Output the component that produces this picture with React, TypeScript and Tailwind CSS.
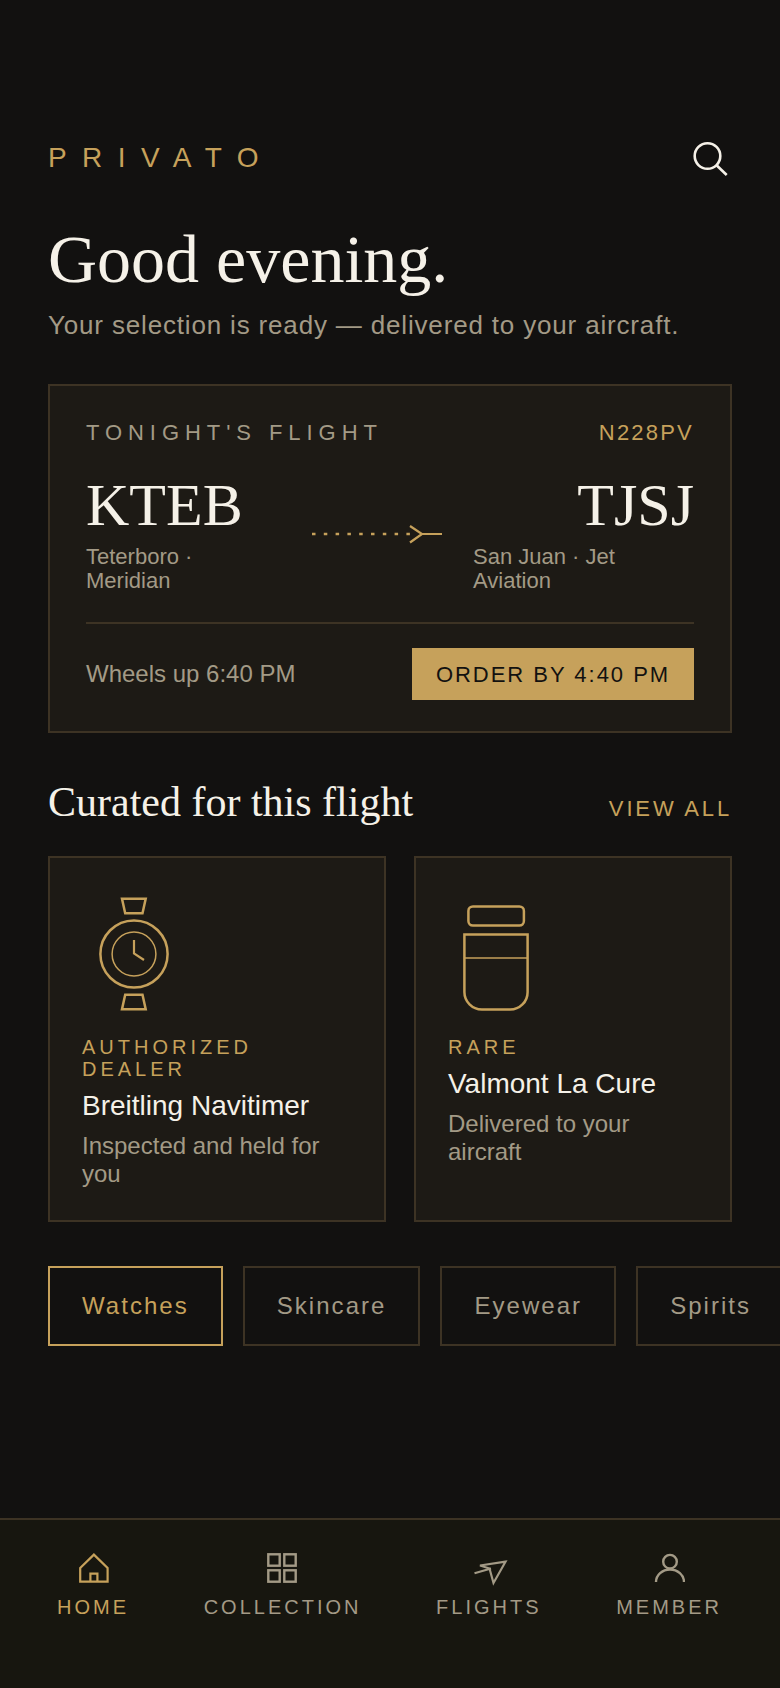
const SANS = "font-['Liberation_Sans',Arial,sans-serif]";
const SERIF = "font-['Liberation_Serif','Times_New_Roman',serif]";

const tabs = ["Watches", "Skincare", "Eyewear", "Spirits"];

function SearchIcon() {
  return (
    <svg width="44" height="44" viewBox="0 0 44 44" fill="none" stroke="#f5f1e8" strokeWidth="2.6" className="shrink-0">
      <circle cx="19.5" cy="20" r="12.8" />
      <path d="M28.8 29.5 L38.7 39" />
    </svg>
  );
}

function RouteArrow() {
  return (
    <svg width="130" height="20" viewBox="0 0 130 20" fill="none" stroke="#c6a15b" className="shrink-0 mt-[53px]">
      <path d="M0 10 H98" strokeWidth="2.4" strokeDasharray="3.5 8.3" />
      <path d="M98 2 L110 10 L98 18.5 M110 10 H130" strokeWidth="2.2" />
    </svg>
  );
}

function WatchIcon() {
  return (
    <svg width="120" height="120" viewBox="0 0 120 120" fill="none" stroke="#c6a15b" strokeWidth="2.5">
      <path d="M40 6.8 H63.7 L60.5 21.2 H43.2 Z" />
      <path d="M43.2 102.8 H60.5 L63.7 117.2 H40 Z" />
      <circle cx="52" cy="62" r="33.6" />
      <circle cx="52" cy="62" r="21.9" strokeWidth="1.5" />
      <path d="M52 48 V61.3 L62 68" strokeWidth="2.2" />
    </svg>
  );
}

function JarIcon() {
  return (
    <svg width="120" height="120" viewBox="0 0 120 120" fill="none" stroke="#c6a15b" strokeWidth="2.5">
      <rect x="20.4" y="14.4" width="55.5" height="19.2" rx="4.5" />
      <path d="M16.4 42.4 H79.6 V100 A17.5 17.5 0 0 1 62 117.6 H34 A17.5 17.5 0 0 1 16.4 100 Z" />
      <path d="M16.4 66 H79.6" strokeWidth="1.6" />
    </svg>
  );
}

function HomeIcon() {
  return (
    <svg width="32" height="32" viewBox="0 0 32 32" fill="none" stroke="#c6a15b" strokeWidth="2.2">
      <path d="M3.2 16 L16.9 2.6 L30.6 16 V29.7 H3.2 Z" />
      <path d="M13.4 29.7 V21.7 H20.4 V29.7" />
    </svg>
  );
}

function GridIcon() {
  return (
    <svg width="32" height="32" viewBox="0 0 32 32" fill="none" stroke="#a39a86" strokeWidth="2.4" className="overflow-visible">
      <rect x="1.3" y="2.3" width="11.4" height="11.4" />
      <rect x="17.3" y="2.3" width="11.4" height="11.4" />
      <rect x="1.3" y="18.3" width="11.4" height="11.4" />
      <rect x="17.3" y="18.3" width="11.4" height="11.4" />
    </svg>
  );
}

function PlaneIcon() {
  return (
    <svg width="32" height="32" viewBox="0 0 32 32" fill="none" stroke="#a39a86" strokeWidth="2.2" className="overflow-visible">
      <path d="M32.5 9.7 L7 13.5 L16.5 16.5 L20.5 31 Z" />
      <path d="M1.5 21.3 L18 16.5" />
    </svg>
  );
}

function UserIcon() {
  return (
    <svg width="32" height="32" viewBox="0 0 32 32" fill="none" stroke="#a39a86" strokeWidth="2.4">
      <circle cx="17" cy="9.7" r="6.8" />
      <path d="M3 30 A14 12.5 0 0 1 31 30" />
    </svg>
  );
}

function NavItem({ label, icon, active }: { label: string; icon: React.ReactNode; active?: boolean }) {
  return (
    <div className="flex flex-col items-center gap-[11px]">
      {icon}
      <span className={"text-[20px] leading-[24px] tracking-[0.15em] " + (active ? "text-[#c6a15b]" : "text-[#a39a86]")}>
        {label}
      </span>
    </div>
  );
}

export default function App() {
  return (
    <div className={`${SANS} w-[780px] h-[1688px] overflow-hidden bg-[#121110] flex flex-col`}>
      <main className="flex-1 pt-[136px] pl-[48px]">
        <header className="flex items-center justify-between pr-[48px] h-[44px]">
          <span className="text-[28px] leading-none tracking-[0.55em] text-[#c6a15b]">PRIVATO</span>
          <SearchIcon />
        </header>

        <h1 className={`${SERIF} mt-[39px] text-[68px] leading-[80px] text-[#f5f1e8]`}>Good evening.</h1>
        <p className="mt-[9px] text-[26px] leading-[34px] tracking-[0.032em] text-[#a39a86]">
          Your selection is ready — delivered to your aircraft.
        </p>

        <section className="mt-[42px] w-[684px] h-[349px] border-2 border-[#3d3324] bg-[#1d1a15] px-[36px] pt-[33px]">
          <div className="flex justify-between items-center h-[26px]">
            <span className="text-[22px] tracking-[0.27em] text-[#a39a86]">TONIGHT'S FLIGHT</span>
            <span className="text-[22px] tracking-[0.1em] text-[#c6a15b]">N228PV</span>
          </div>

          <div className="flex items-start mt-[26px]">
            <div className="w-[226px]">
              <div className={`${SERIF} text-[60px] leading-[68px] text-[#f5f1e8]`}>KTEB</div>
              <div className="mt-[6px] text-[22px] leading-[24px] text-[#a39a86] w-[160px]">Teterboro · Meridian</div>
            </div>
            <RouteArrow />
            <div className="w-[221px] ml-auto">
              <div className={`${SERIF} text-[60px] leading-[68px] text-[#f5f1e8] text-right`}>TJSJ</div>
              <div className="mt-[6px] text-[22px] leading-[24px] text-[#a39a86]">San Juan · Jet Aviation</div>
            </div>
          </div>

          <div className="mt-[29px] border-t-2 border-[#3d3324] pt-[24px] flex items-center justify-between">
            <span className="text-[24px] text-[#a39a86]">Wheels up 6:40 PM</span>
            <span className="h-[52px] w-[282px] bg-[#c6a15b] flex items-center justify-center text-[22px] tracking-[0.09em] text-[#121110]">
              ORDER BY 4:40 PM
            </span>
          </div>
        </section>

        <div className="mt-[43px] pr-[48px] flex items-baseline justify-between">
          <h2 className={`${SERIF} text-[42px] leading-[52px] text-[#f5f1e8]`}>Curated for this flight</h2>
          <span className="text-[22px] tracking-[0.13em] text-[#c6a15b]">VIEW ALL</span>
        </div>

        <div className="mt-[28px] flex gap-[28px] pr-[48px]">
          <article className="w-[338px] h-[366px] border-2 border-[#3d3324] bg-[#1d1a15] px-[32px] pt-[34px]">
            <WatchIcon />
            <div className="mt-[24px] text-[20px] leading-[22px] tracking-[0.2em] text-[#c6a15b]">AUTHORIZED DEALER</div>
            <div className="mt-[8px] text-[28px] leading-[36px] text-[#f5f1e8]">Breitling Navitimer</div>
            <div className="mt-[8px] text-[24px] leading-[28px] text-[#a39a86]">Inspected and held for you</div>
          </article>
          <article className="w-[318px] h-[366px] border-2 border-[#3d3324] bg-[#1d1a15] px-[32px] pt-[34px]">
            <JarIcon />
            <div className="mt-[24px] text-[20px] leading-[22px] tracking-[0.2em] text-[#c6a15b]">RARE</div>
            <div className="mt-[8px] text-[28px] leading-[36px] text-[#f5f1e8]">Valmont La Cure</div>
            <div className="mt-[8px] text-[24px] leading-[28px] text-[#a39a86]">Delivered to your aircraft</div>
          </article>
        </div>

        <div className="mt-[44px] flex gap-[20px]">
          {tabs.map((t, i) => (
            <span
              key={t}
              className={
                "h-[80px] shrink-0 px-[32px] flex items-center border-2 text-[24px] tracking-[0.085em] " +
                (i === 0 ? "border-[#c6a15b] text-[#c6a15b]" : "border-[#3d3324] text-[#a39a86]")
              }
            >
              {t}
            </span>
          ))}
        </div>
      </main>

      <nav className="h-[170px] border-t-2 border-[#3d3324] bg-[#17160f] pl-[57px] pr-[58px] pt-[32px] flex justify-between items-start">
        <NavItem label="HOME" active icon={<HomeIcon />} />
        <NavItem label="COLLECTION" icon={<GridIcon />} />
        <NavItem label="FLIGHTS" icon={<PlaneIcon />} />
        <NavItem label="MEMBER" icon={<UserIcon />} />
      </nav>
    </div>
  );
}
